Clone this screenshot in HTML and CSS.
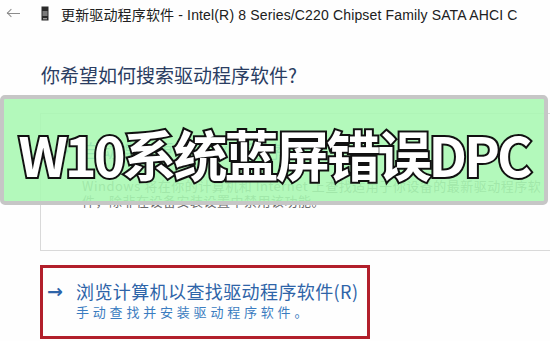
FILE: index.html
```html
<!DOCTYPE html>
<html lang="zh-CN">
<head>
<meta charset="utf-8">
<title>更新驱动程序软件</title>
<link rel="stylesheet" href="styles.css">
</head>
<body>
<div class="page">
  <header class="titlebar">
    <span class="back" aria-label="返回"><span class="back-line"></span><span class="back-head"></span></span>
    <svg class="devicon" width="8" height="15" viewBox="0 0 8 15">
      <rect x="0.5" y="0.5" width="7" height="14" fill="#2a2a2a"/>
      <rect x="1.5" y="5" width="5" height="5" fill="#7a7a7a"/>
      <rect x="2" y="12" width="4" height="1.4" fill="#9a9a9a"/>
    </svg>
    <span class="wtitle">更新驱动程序软件 - Intel(R) 8 Series/C220 Chipset Family SATA AHCI C</span>
  </header>

  <h1 class="question">你希望如何搜索驱动程序软件?</h1>

  <div class="option auto">
    <div class="opt-main"><span class="arrow">&#8594;</span>自动搜索更新的驱动程序软件(S)</div>
    <div class="opt-desc">Windows 将在你的计算机和 Internet 上查找适用于你设备的最新驱动程序软<br>件，除非在设备安装设置中禁用该功能。</div>
  </div>

  <div class="option manual">
    <div class="opt-main"><span class="arrow">&#8594;</span>浏览计算机以查找驱动程序软件(R)</div>
    <div class="opt-sub">手动查找并安装驱动程序软件。</div>
  </div>

  <div class="banner"><span class="banner-text">W10系统蓝屏错误DPC</span></div>
</div>
</body>
</html>
```

FILE: styles.css
```css
* { box-sizing: border-box; }
html, body { margin: 0; padding: 0; background: #fff; }
body {
  font-family: "Noto Sans CJK SC", "Noto Sans", sans-serif;
  width: 550px;
  height: 341px;
  overflow: hidden;
}
.page {
  position: relative;
  width: 550px;
  height: 341px;
  overflow: hidden;
  background: #fefefe;
}
.titlebar {
  display: flex;
  align-items: center;
  height: 27px;
  padding-left: 6px;
  white-space: nowrap;
  overflow: hidden;
}
.back {
  flex: none;
  position: relative;
  display: block;
  width: 14px;
  height: 10px;
}
.back-line {
  position: absolute;
  left: 1px;
  top: 4px;
  width: 13px;
  height: 1.5px;
  background: #8c8c8c;
}
.back-head {
  position: absolute;
  left: 1.5px;
  top: 1.2px;
  width: 6px;
  height: 6px;
  border-left: 1.5px solid #8c8c8c;
  border-bottom: 1.5px solid #8c8c8c;
  transform: rotate(45deg);
}
.devicon {
  margin-left: 21px;
  flex: none;
}
.wtitle {
  margin-left: 12px;
  font-size: 14px;
  color: #202020;
  font-family: "Liberation Sans", "Noto Sans CJK SC", sans-serif;
  letter-spacing: 0.15px;
}
.question {
  margin: 0;
  padding: 35px 0 0 41px;
  font-size: 19px;
  line-height: 26px;
  font-weight: 400;
  color: #2a3d62;
  font-family: "Noto Sans CJK SC", sans-serif;
}
.option {
  margin-left: 40px;
}
.auto {
  margin-top: 25px;
  height: 138px;
  width: 540px;
  border: 1px solid #d9d9d9;
  border-right: none;
  padding: 24px 0 0 12px;
  overflow: hidden;
}
.opt-main {
  display: flex;
  align-items: center;
  font-size: 18px;
  line-height: 24px;
  color: #2e64a8;
  letter-spacing: 0.4px;
  white-space: nowrap;
}
.arrow {
  font-family: "DejaVu Sans", sans-serif;
  font-size: 19px;
  font-weight: 700;
  width: 29px;
  letter-spacing: 0;
}
.opt-desc {
  margin-top: 16px;
  padding-left: 29px;
  font-size: 13px;
  line-height: 15px;
  color: #6a6a6a;
  letter-spacing: 0.5px;
  white-space: nowrap;
}
.manual {
  margin-top: 14px;
  width: 330px;
  height: 74px;
  border: 3px solid #b21f2b;
  padding: 11px 0 0 4px;
}
.opt-sub {
  padding-left: 29px;
  font-size: 13px;
  line-height: 17px;
  color: #3a7cc0;
  letter-spacing: 3.8px;
  white-space: nowrap;
}
.banner {
  position: absolute;
  left: 0;
  top: 95px;
  width: 548px;
  height: 110px;
  border: 4px solid #c6c6c6;
  border-radius: 5px;
  background: rgba(168, 248, 178, 0.88);
  display: flex;
  align-items: center;
  justify-content: center;
}
.banner-text {
  font-family: "Noto Sans CJK SC", sans-serif;
  font-weight: 700;
  font-size: 54px;
  line-height: 1;
  letter-spacing: -3px;
  color: #fff;
  -webkit-text-stroke: 4px #111;
  paint-order: stroke fill;
  margin-top: 8px;
  white-space: nowrap;
}
```
